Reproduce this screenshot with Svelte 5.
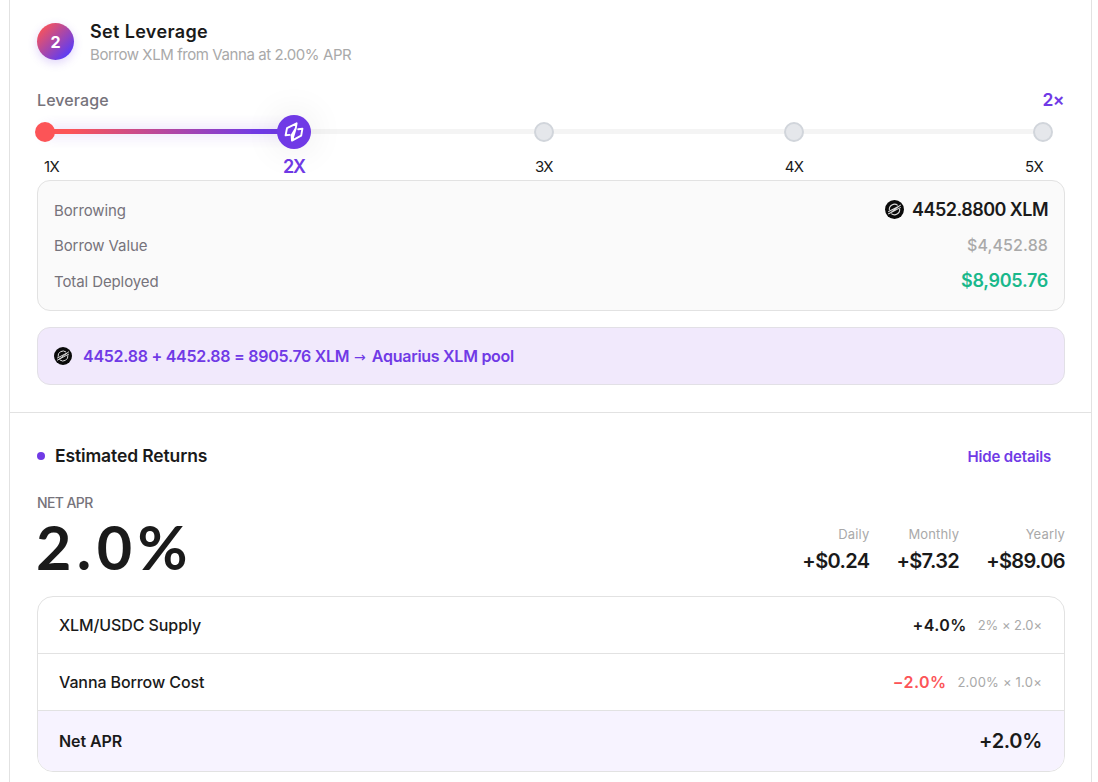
<script>
  const stops = [
    { x: 0, kind: 'start', label: '1X' },
    { x: 25, kind: 'active', label: '2X' },
    { x: 50, kind: 'idle', label: '3X' },
    { x: 75, kind: 'idle', label: '4X' },
    { x: 100, kind: 'idle', label: '5X' }
  ];
  const earnings = [
    { label: 'Daily', value: '+$0.24' },
    { label: 'Monthly', value: '+$7.32' },
    { label: 'Yearly', value: '+$89.06' }
  ];
  const lines = [
    { label: 'XLM/USDC Supply', value: '+4.0%', note: '2% × 2.0×', neg: false },
    { label: 'Vanna Borrow Cost', value: '−2.0%', note: '2.00% × 1.0×', neg: true }
  ];
</script>

{#snippet coin(size)}
  <svg class="coin" width={size} height={size} viewBox="0 0 20 20" aria-hidden="true">
    <circle cx="10" cy="10" r="10" fill="#0a0a0a" />
    <g fill="none" stroke="#dcdcdc" stroke-width="1.1">
      <path d="M4.6 10.8A5.5 5.5 0 0 1 13.4 5.6M15.4 9.2A5.5 5.5 0 0 1 6.6 14.4" />
      <path d="M3.4 12.4L14.6 6.6M3.4 14.8L16.6 7.8M5.6 13.6L16.6 5.2" />
    </g>
  </svg>
{/snippet}

<main class="card">
  <section class="leverage">
    <header class="head">
      <span class="step">2</span>
      <div>
        <h2>Set Leverage</h2>
        <p>Borrow XLM from Vanna at 2.00% APR</p>
      </div>
    </header>

    <div class="lev-title"><span>Leverage</span><b>2×</b></div>

    <div class="slider">
      <div class="track"><div class="fill"></div></div>
      {#each stops as s}
        <span class="dot {s.kind}" style="left:{s.x}%">
          {#if s.kind === 'active'}
            <svg width="20" height="20" viewBox="0 0 20 20" aria-hidden="true">
              <path d="M5.6 12.9L1.6 13.3L3 6.2L12.6 1.3L11.8 6.2L7.6 13.2L8 18.6L17.2 13.7L18.4 6.7L14.2 7.2M11.8 6.2L8 18.6" fill="none" stroke="#fff" stroke-width="1.9" stroke-linejoin="round" stroke-linecap="round" />
            </svg>
          {/if}
        </span>
      {/each}
    </div>
    <div class="labels">
      {#each stops as s}
        <span class:on={s.kind === 'active'}>{s.label}</span>
      {/each}
    </div>

    <div class="summary">
      <div class="row"><span>Borrowing</span><strong class="amount">{@render coin(19)}4452.8800 XLM</strong></div>
      <div class="row"><span>Borrow Value</span><strong class="muted">$4,452.88</strong></div>
      <div class="row"><span>Total Deployed</span><strong class="green">$8,905.76</strong></div>
    </div>

    <div class="route">
      {@render coin(18)}
      <span>4452.88 + 4452.88 = 8905.76 XLM <i>→</i> Aquarius XLM pool</span>
    </div>
  </section>

  <section class="returns">
    <div class="ret-head">
      <h3>Estimated Returns</h3>
      <button type="button">Hide details</button>
    </div>
    <div class="apr">
      <div>
        <div class="cap">NET APR</div>
        <div class="big">2.0%</div>
      </div>
      <div class="earn">
        {#each earnings as e}
          <div><small>{e.label}</small><strong>{e.value}</strong></div>
        {/each}
      </div>
    </div>
    <div class="table">
      {#each lines as l}
        <div class="line">
          <span class="name">{l.label}</span>
          <strong class:neg={l.neg}>{l.value}</strong>
          <small>{l.note}</small>
        </div>
      {/each}
      <div class="line total">
        <span class="name">Net APR</span>
        <strong>+2.0%</strong>
      </div>
    </div>
  </section>
</main>

<style>
  :global(body) { margin: 0; background: #fff; overflow: hidden; }
  .card {
    box-sizing: border-box; height: 782px; overflow: hidden; margin: 0 6px 0 9px;
    border: solid #e2e2e2; border-width: 0 1px;
    font-family: Inter, sans-serif; color: #1a1a1a;
  }
  h2, h3, p { margin: 0; }
  .leverage { box-sizing: border-box; height: 413px; padding: 21px 26px 0 27px; border-bottom: 1px solid #e2e2e2; }
  .head { display: flex; gap: 16px; height: 44px; }
  .step {
    width: 37px; height: 37px; margin-top: 2px; border-radius: 50%; flex: none;
    background: linear-gradient(135deg, #fc5457 10%, #5c3bf5 85%);
    box-shadow: 0 3px 10px rgba(112, 58, 230, .22);
    color: #fff; font-weight: 700; font-size: 16px; line-height: 38px; text-align: center;
  }
  h2 { font-weight: 600; font-size: 18px; line-height: 22px; letter-spacing: .35px; }
  .head p { font-size: 15px; line-height: 24px; letter-spacing: -.42px; color: #a9a9a9; }
  .lev-title { display: flex; justify-content: space-between; height: 24px; margin-top: 24px; line-height: 23px; font-size: 16px; font-weight: 500; letter-spacing: .1px; color: #76737b; }
  .lev-title b { margin-right: 1px; line-height: 22px; color: #703ae6; font-weight: 600; font-size: 17.5px; letter-spacing: -.6px; }

  .slider { position: relative; height: 38px; margin: 0 22px 0 8px; }
  .track { position: absolute; left: 0; right: 0; top: 16px; height: 5px; background: #f4f4f4; }
  .fill { width: 25%; height: 5px; background: linear-gradient(90deg, #fc5457, #fc5457 10%, #703ae6 85%); box-shadow: 0 0 14px rgba(112, 58, 230, .3); }
  .dot { position: absolute; top: 19px; box-sizing: border-box; width: 20px; height: 20px; border-radius: 50%; transform: translate(-50%, -50%); }
  .start { background: #fc5457; }
  .idle { background: #e5e7eb; border: 2px solid #d1d5db; }
  .active { display: grid; place-items: center; top: 19.4px; width: 34px; height: 34px; margin-left: -.5px; background: #703ae6; box-shadow: 0 0 36px rgba(0, 0, 0, .1); }

  .labels { display: grid; grid-template-columns: 125px 250px 250px 250px 124px; height: 29px; margin: 0 21px 0 7px; line-height: 31px; font-size: 15px; letter-spacing: -.7px; text-align: center; }
  .labels span { white-space: nowrap; }
  .labels span:first-child { text-align: left; }
  .labels span:last-child { text-align: right; }
  .labels .on { color: #703ae6; font-weight: 600; font-size: 18px; letter-spacing: -1px; }

  .summary { box-sizing: border-box; height: 131px; padding: 11px 16px; border: 1px solid #e2e2e2; border-radius: 13px; background: #fafafa; }
  .row { display: flex; justify-content: space-between; height: 35.5px; line-height: 37px; font-size: 15px; color: #76737b; letter-spacing: -.1px; }
  .row:nth-child(2) { line-height: 36px; }
  .row strong { font-weight: 600; font-size: 18px; line-height: 35px; }
  .row .amount { display: flex; align-items: center; gap: 8px; color: #1a1a1a; letter-spacing: -.53px; }
  .row .muted { color: #a9a9a9; font-weight: 500; font-size: 16px; letter-spacing: .11px; }
  .row .green { color: #19b88b; letter-spacing: -.29px; }
  .coin { display: block; flex: none; }

  .route { box-sizing: border-box; display: flex; align-items: center; gap: 11px; height: 58px; margin-top: 16px; padding: 0 16px; border: 1px solid #e2e0e6; border-radius: 13px; background: #f1e9fc; color: #703ae6; font-weight: 600; font-size: 16px; letter-spacing: -.27px; white-space: nowrap; }
  .route i { font: 400 14px "DejaVu Sans", sans-serif; display: inline-block; width: 14px; margin-left: 1px; line-height: 16px; }

  .returns { padding: 27px 26px 0 27px; }
  .ret-head { display: flex; justify-content: space-between; align-items: center; height: 30px; }
  h3 { display: flex; align-items: center; gap: 10px; font-weight: 600; font-size: 17.5px; letter-spacing: -.12px; }
  h3::before { content: ""; width: 8px; height: 8px; margin-top: 2px; border-radius: 50%; background: #703ae6; }
  button { margin: 2px 14px 0 0; padding: 0; border: 0; background: none; font: 600 15px Inter, sans-serif; letter-spacing: -.16px; color: #703ae6; }
  .apr { display: flex; justify-content: space-between; height: 126px; }
  .cap { margin-top: 23px; font-size: 14px; line-height: 20px; letter-spacing: -.6px; font-weight: 500; color: #76737b; }
  .big { margin: -2px 0 0 -1px; font: 700 61px/72px Lato, sans-serif; letter-spacing: 5.4px; }
  .earn { display: flex; gap: 27px; margin-top: 54px; text-align: right; }
  .earn small, .earn strong { display: block; }
  .earn small { font-size: 13px; line-height: 20px; letter-spacing: .15px; color: #a9a9a9; }
  .earn strong { font-weight: 600; font-size: 20px; line-height: 34px; letter-spacing: -.64px; }

  .table { border: 1px solid #e2e2e2; border-radius: 16px; overflow: hidden; }
  .line { display: flex; align-items: center; height: 56px; padding: 0 22px 0 21px; border-bottom: 1px solid #e2e2e2; }
  .name { flex: 1; font-weight: 500; font-size: 16px; letter-spacing: -.1px; }
  .line strong { font-weight: 600; font-size: 16px; letter-spacing: .4px; }
  .line .neg { color: #fc5457; }
  .line small { margin-left: 11px; font-size: 13px; letter-spacing: -.05px; color: #a9a9a9; }
  .line .neg + small { letter-spacing: .22px; }
  .total { height: 60px; border: 0; background: #f7f3ff; }
  .total .name { font-weight: 600; }
  .total strong { font-size: 20px; letter-spacing: -.3px; }
</style>
